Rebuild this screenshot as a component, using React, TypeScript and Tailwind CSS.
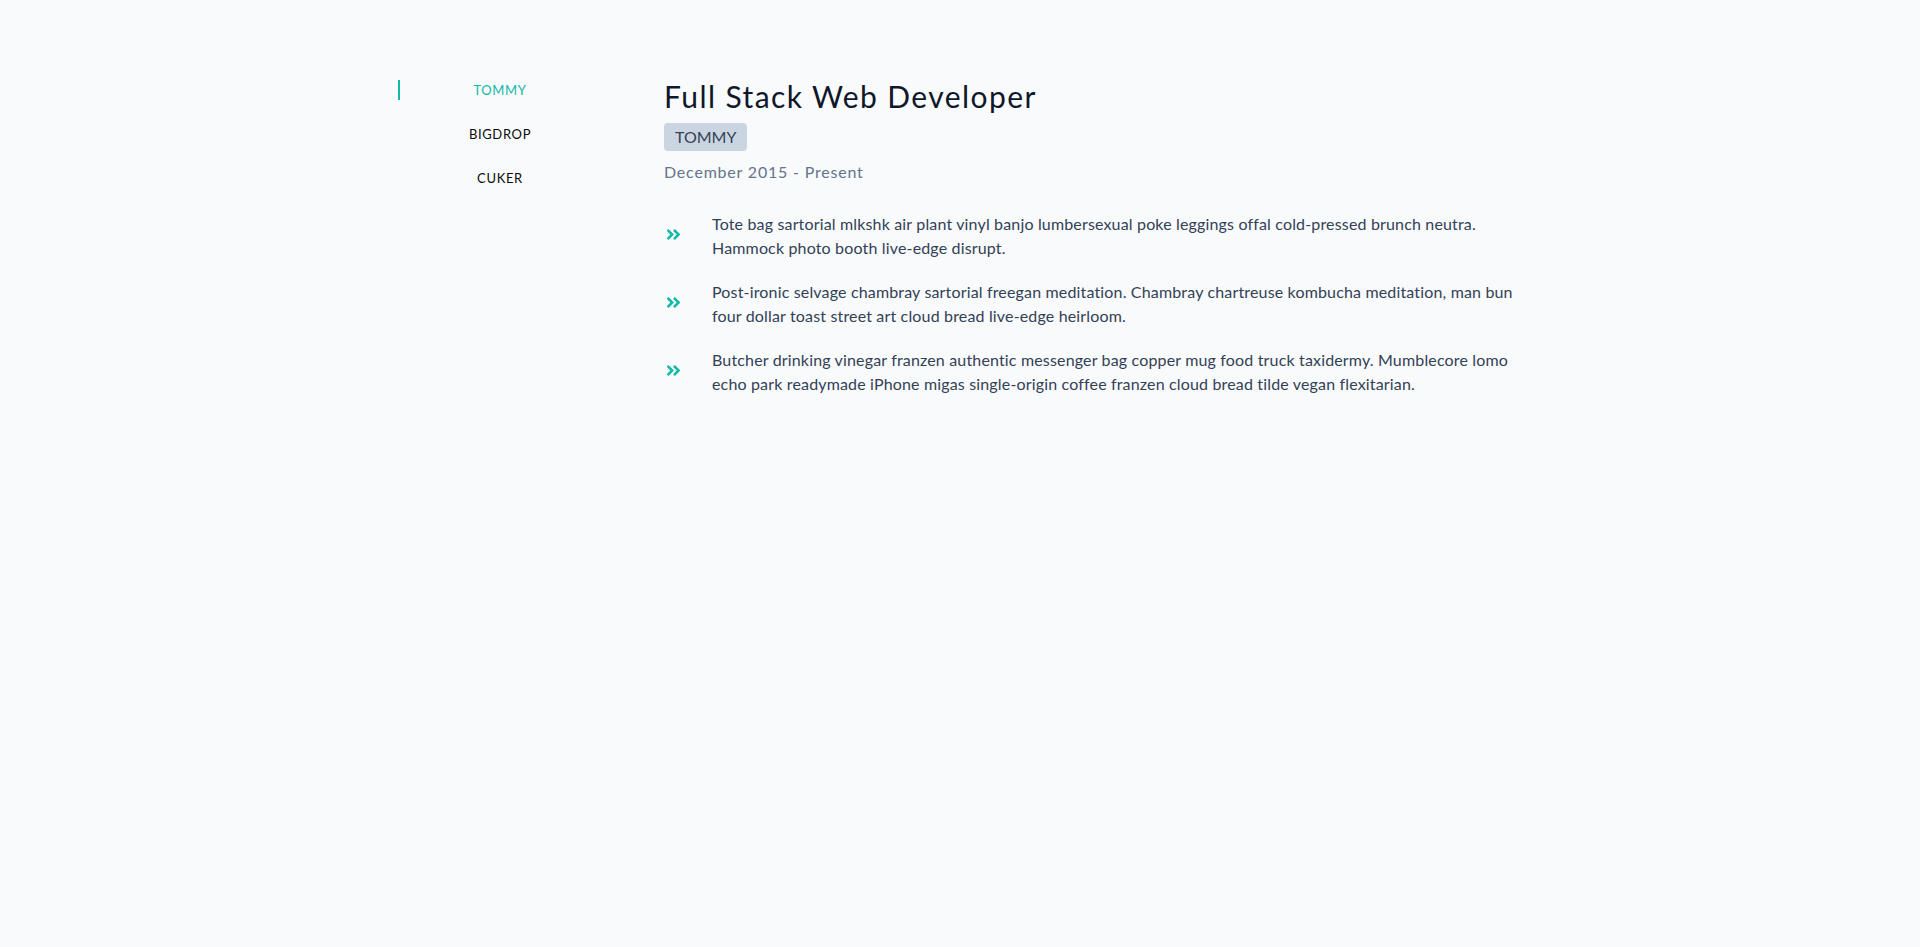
import { useState } from 'react';
import { FaAngleDoubleRight } from 'react-icons/fa';

const jobs = [
  {
    company: 'TOMMY',
    title: 'Full Stack Web Developer',
    dates: 'December 2015 - Present',
    duties: [
      'Tote bag sartorial mlkshk air plant vinyl banjo lumbersexual poke leggings offal cold-pressed brunch neutra. Hammock photo booth live-edge disrupt.',
      'Post-ironic selvage chambray sartorial freegan meditation. Chambray chartreuse kombucha meditation, man bun four dollar toast street art cloud bread live-edge heirloom.',
      'Butcher drinking vinegar franzen authentic messenger bag copper mug food truck taxidermy. Mumblecore lomo echo park readymade iPhone migas single-origin coffee franzen cloud bread tilde vegan flexitarian.',
    ],
  },
  {
    company: 'BIGDROP',
    title: 'Front-End Engineer',
    dates: 'May 2015 - December 2015',
    duties: [
      'Hashtag drinking vinegar scenester mumblecore snackwave four dollar toast, lumbersexual XOXO. Cardigan church-key pabst, biodiesel vexillologist viral squid.',
    ],
  },
  {
    company: 'CUKER',
    title: 'Engineering Intern',
    dates: 'May 2014 - September 2015',
    duties: [
      'I am baby fixie small batch pabst, meditation organic cred artisan. Pour-over bespoke migas, taxidermy before they sold out.',
    ],
  },
];

export default function App() {
  const [value, setValue] = useState(0);
  const job = jobs[value];

  return (
    <div className="min-h-[947px] bg-[#f8fafc] font-['Lato',sans-serif]">
      <section className="flex gap-16 pl-[398px] pt-[78px]">
        {/* company tabs */}
        <div className="flex w-[202px] flex-col pt-[2px]">
          {jobs.map((item, index) => (
            <button
              key={item.company}
              onClick={() => setValue(index)}
              className={`mb-6 h-5 border-l-2 text-[13px] leading-5 tracking-wider ${
                index === value ? 'border-[#14b8a6] text-[#14b8a6]' : 'border-transparent text-[#0a0a0a]'
              }`}
            >
              {item.company}
            </button>
          ))}
        </div>

        {/* job info */}
        <article className="w-[860px]">
          <h3 className="text-[30px] leading-9 tracking-[0.047em] text-[#0f172a]">{job.title}</h3>
          <h4 className="mt-[9px] inline-block rounded bg-[#cbd5e1] px-[11px] text-[16px] leading-7 text-[#334155]">
            {job.company}
          </h4>
          <p className="mt-[9px] text-[16px] leading-6 tracking-wider text-[#64748b]">{job.dates}</p>

          <div className="mt-[28px] space-y-5">
            {job.duties.map((duty, index) => (
              <div key={index} className="flex items-center">
                <div className="-mt-1 w-12 shrink-0 pl-[1px]">
                  <FaAngleDoubleRight size={17} className="text-[#14b8a6]" />
                </div>
                <p className="text-[16px] leading-6 tracking-[0.01em] text-[#334155]">{duty}</p>
              </div>
            ))}
          </div>
        </article>
      </section>
    </div>
  );
}
